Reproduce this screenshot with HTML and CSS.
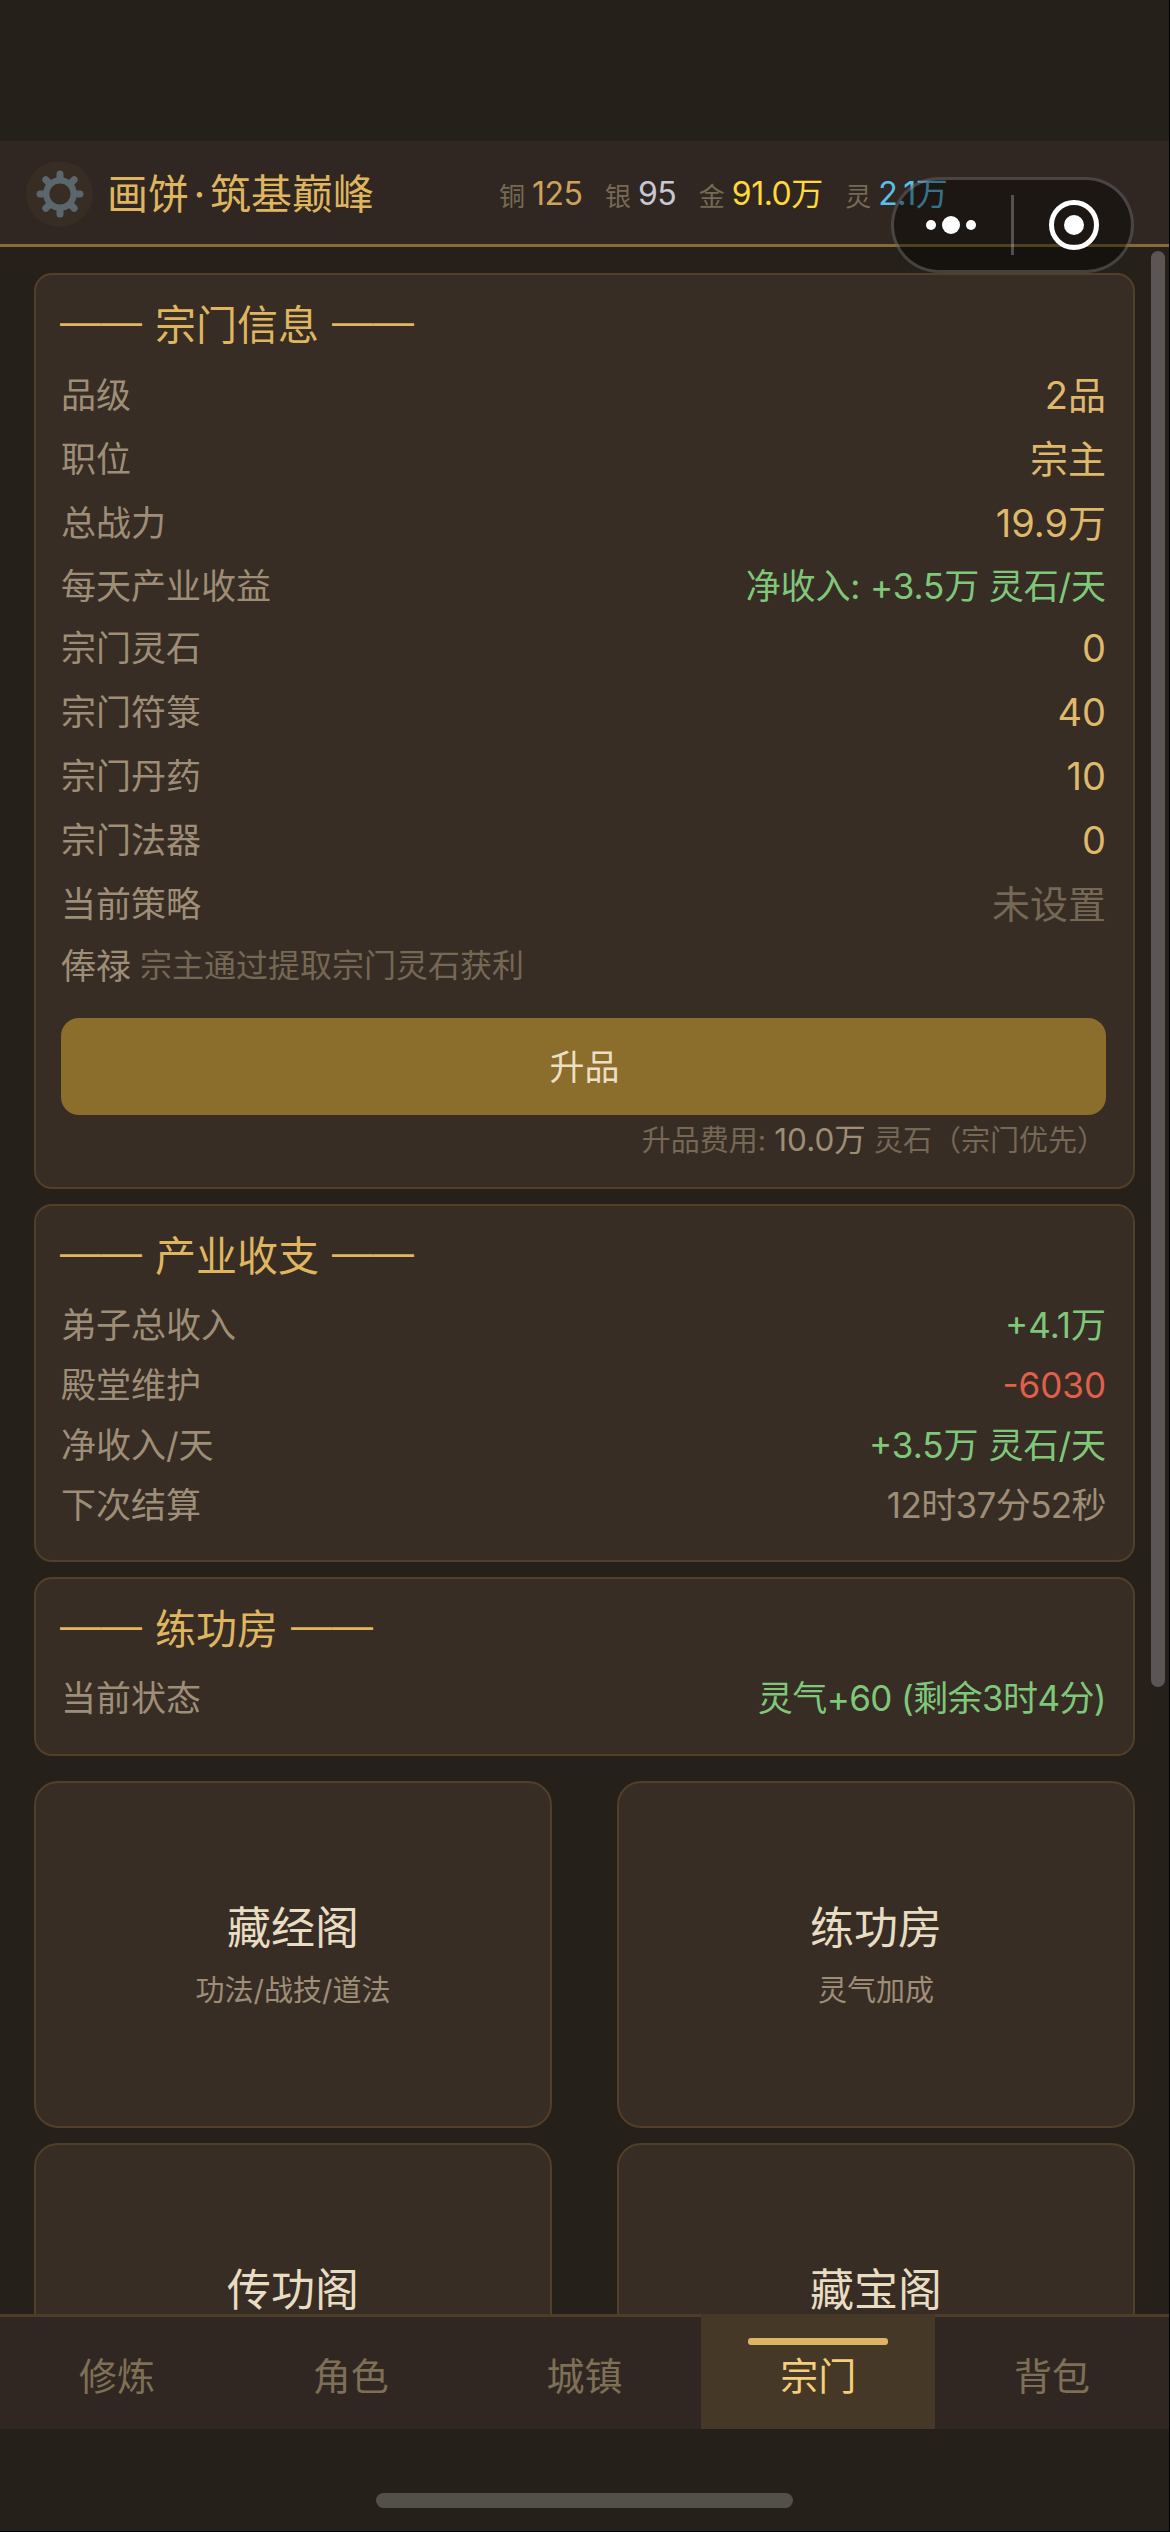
FILE: index.html
```html
<!DOCTYPE html>
<html lang="zh-CN">
<head>
<meta charset="utf-8">
<title>画饼·筑基巅峰</title>
<link rel="stylesheet" href="styles.css">
</head>
<body>
<div class="app">
  <header class="header">
    <div class="gear">
      <svg width="48" height="48" viewBox="-24 -24 48 48" fill="none" stroke="#5b676c">
        <circle r="13.7" stroke-width="6.2"/>
        <g stroke-width="7" stroke-linecap="round">
          <path d="M0-16.5V-20M0 16.5V20M-16.5 0H-20M16.5 0H20M-12-12L-14.2-14.2M12-12L14.2-14.2M-12 12L-14.2 14.2M12 12L14.2 14.2"/>
        </g>
      </svg>
    </div>
    <h1 class="title">画饼<span class="dot">·</span>筑基巅峰</h1>
    <div class="coins">
      <div class="coin copper"><small>铜</small><b>125</b></div>
      <div class="coin silver"><small>银</small><b>95</b></div>
      <div class="coin gold"><small>金</small><b>91.0万</b></div>
      <div class="coin spirit"><small>灵</small><b>2.1万</b></div>
    </div>
  </header>

  <main class="content">
    <section class="card sect">
      <h2><i>——</i>宗门信息<i>——</i></h2>
      <div class="row"><span>品级</span><b>2品</b></div>
      <div class="row"><span>职位</span><b>宗主</b></div>
      <div class="row"><span>总战力</span><b>19.9万</b></div>
      <div class="row compact"><span>每天产业收益</span><b class="plus">净收入: +3.5万 灵石/天</b></div>
      <div class="row"><span>宗门灵石</span><b>0</b></div>
      <div class="row"><span>宗门符箓</span><b>40</b></div>
      <div class="row"><span>宗门丹药</span><b>10</b></div>
      <div class="row"><span>宗门法器</span><b>0</b></div>
      <div class="row"><span>当前策略</span><b class="unset">未设置</b></div>
      <div class="row pay"><span>俸禄</span><em>宗主通过提取宗门灵石获利</em></div>
      <button class="upgrade">升品</button>
      <p class="cost">升品费用: <b>10.0万</b> 灵石（宗门优先）</p>
    </section>

    <section class="card">
      <h2><i>——</i>产业收支<i>——</i></h2>
      <div class="row"><span>弟子总收入</span><b class="plus">+4.1万</b></div>
      <div class="row"><span>殿堂维护</span><b class="minus">-6030</b></div>
      <div class="row"><span>净收入/天</span><b class="plus">+3.5万 灵石/天</b></div>
      <div class="row"><span>下次结算</span><b class="tight">12时37分52秒</b></div>
    </section>

    <section class="card">
      <h2><i>——</i>练功房<i>——</i></h2>
      <div class="row"><span>当前状态</span><b class="plus tight">灵气+60 (剩余3时4分)</b></div>
    </section>

    <section class="halls">
      <div class="hall"><h3>藏经阁</h3><p>功法/战技/道法</p></div>
      <div class="hall"><h3>练功房</h3><p>灵气加成</p></div>
      <div class="hall"><h3>传功阁</h3></div>
      <div class="hall"><h3>藏宝阁</h3></div>
    </section>
  </main>

  <nav class="tabs">
    <div class="tab">修炼</div>
    <div class="tab">角色</div>
    <div class="tab">城镇</div>
    <div class="tab active">宗门</div>
    <div class="tab">背包</div>
  </nav>
  <footer class="home"><div class="home-bar"></div></footer>

  <div class="scrollbar"></div>
  <div class="capsule">
    <svg width="237" height="90" viewBox="0 0 237 90">
      <g fill="#fff">
        <circle cx="37" cy="45" r="5"/>
        <circle cx="57" cy="45" r="9"/>
        <circle cx="77" cy="45" r="5"/>
        <circle cx="180" cy="45" r="10"/>
      </g>
      <circle cx="180" cy="45" r="22.5" fill="none" stroke="#fff" stroke-width="5"/>
      <rect x="117" y="15" width="3" height="60" fill="#fff" fill-opacity=".25"/>
    </svg>
  </div>
</div>
</body>
</html>
```
FILE: styles.css
```css
* { box-sizing: border-box; margin: 0; padding: 0; }

body {
  width: 1170px;
  height: 2532px;
  overflow: hidden;
  background: #000;
  font-family: Inter, "Noto Sans CJK SC", sans-serif;
}

b, i, em, h1, h2, h3, small { font-weight: 400; font-style: normal; }

.app {
  position: relative;
  display: flex;
  flex-direction: column;
  width: 1169px;
  height: 2531px;
  padding-top: 141px;
  background: #25201a;
}

/* header */
.header {
  flex: none;
  display: flex;
  align-items: center;
  height: 106px;
  padding: 3px 0 0 26px;
  background: #312722;
  border-bottom: 3px solid #88693a;
}
.gear {
  display: flex;
  align-items: center;
  justify-content: center;
  width: 67px;
  height: 66px;
  border-radius: 50%;
  background: #372d25;
}
.title {
  width: 392px;
  margin-left: 14px;
  font-size: 41px;
  line-height: 48px;
  color: #dfb65f;
  white-space: nowrap;
}
.dot { display: inline-block; width: 21px; text-align: center; }
.coins { display: flex; gap: 22.5px; white-space: nowrap; }
.coin { display: flex; align-items: center; gap: 7px; }
.coin small { font-size: 26px; color: #756a53; }
.coin b { font-size: 32px; line-height: 38px; letter-spacing: -.5px; }
.copper b { color: #cda35c; }
.silver b { color: #c8c8d4; }
.gold b { color: #ffd93a; }
.spirit b { color: #5bc0e8; }

/* scrolling content */
.content {
  flex: none;
  height: 2067px;
  padding: 26px 34px 0;
  overflow: hidden;
}
.card {
  margin-bottom: 15px;
  padding: 26px 27px 25.5px 25px;
  background: #372d25;
  border: 2px solid #523f29;
  border-radius: 18px;
}
.card h2 {
  display: flex;
  gap: 13px;
  height: 48px;
  margin: 0 0 15.5px -1px;
  font-size: 41px;
  line-height: 48px;
  color: #dfb65f;
  white-space: nowrap;
}
.card h2 i {
  margin-top: -4px;
  font-family: "Liberation Sans", sans-serif;
}
.row {
  display: flex;
  align-items: center;
  justify-content: space-between;
  height: 59.75px;
  font-size: 35px;
  line-height: 42px;
  color: #9f8e77;
  white-space: nowrap;
}
.row b.plus { color: #7fc87a; }
.row b.minus { color: #e2604b; }
.row b.tight { letter-spacing: -.6px; }

.sect { height: 916px; }
.card.sect h2 { margin-bottom: 14px; }
.sect .row { height: 64px; }
.sect .row b { font-size: 38px; color: #dfb86c; }
.sect .row.compact { height: 61px; }
.sect .row.pay { height: 60px; justify-content: flex-start; gap: 9px; }
.sect .row b.plus { font-size: 35px; color: #7fc87a; letter-spacing: -.1px; }
.sect .row b.unset { color: #756855; }
.pay em { font-size: 32px; color: #756855; }
.upgrade {
  display: block;
  width: 1045px;
  height: 97px;
  margin-top: 22px;
  padding: 0 0 5px 2px;
  border: 0;
  border-radius: 18px;
  background: #8b6e2c;
  color: #ecdfc5;
  font: 400 35px Inter, "Noto Sans CJK SC", sans-serif;
}
.cost {
  margin-top: 6px;
  height: 38px;
  font-size: 29px;
  line-height: 38px;
  text-align: right;
  color: #756855;
  white-space: nowrap;
}
.cost b { font-size: 31.5px; color: #9f8e77; }

.halls {
  display: grid;
  grid-template-columns: 518px 518px;
  justify-content: space-between;
  grid-auto-rows: 347px;
  row-gap: 15px;
  margin-top: 25px;
}
.hall {
  display: flex;
  flex-direction: column;
  align-items: center;
  padding-top: 119px;
  background: #372d25;
  border: 2px solid #523f29;
  border-radius: 24px;
}
.hall h3 { font-size: 44px; line-height: 52px; color: #e8dcc2; }
.hall p { margin-top: 19px; font-size: 29px; line-height: 36px; color: #9f8e77; }

/* bottom tabs */
.tabs {
  flex: none;
  display: flex;
  height: 115px;
  background: #312722;
}
.tab {
  position: relative;
  flex: 1;
  border-top: 3px solid #4d3c28;
  padding-top: 36px;
  text-align: center;
  font-size: 38px;
  line-height: 46px;
  color: #7d7056;
}
.tab.active { background: #453826; border-top-color: #453826; color: #f4cf79; }
.tab.active::before {
  content: "";
  position: absolute;
  top: 21px;
  left: 47px;
  width: 140px;
  height: 7px;
  border-radius: 3px;
  background: #dcb464;
}

.home { flex: 1; padding: 64px 0 0; }
.home-bar {
  width: 417px;
  height: 15px;
  margin: 0 auto;
  border-radius: 8px;
  background: #53504a;
}

/* overlays */
.scrollbar {
  position: absolute;
  top: 251px;
  left: 1151px;
  width: 14px;
  height: 1436px;
  border-radius: 7px;
  background: #5b5653;
}
.capsule {
  position: absolute;
  top: 177px;
  left: 891px;
  width: 243px;
  height: 96px;
  border: 3px solid rgba(255, 255, 255, .2);
  border-radius: 48px;
  background: rgba(0, 0, 0, .4);
}
.capsule svg { display: block; }
```
